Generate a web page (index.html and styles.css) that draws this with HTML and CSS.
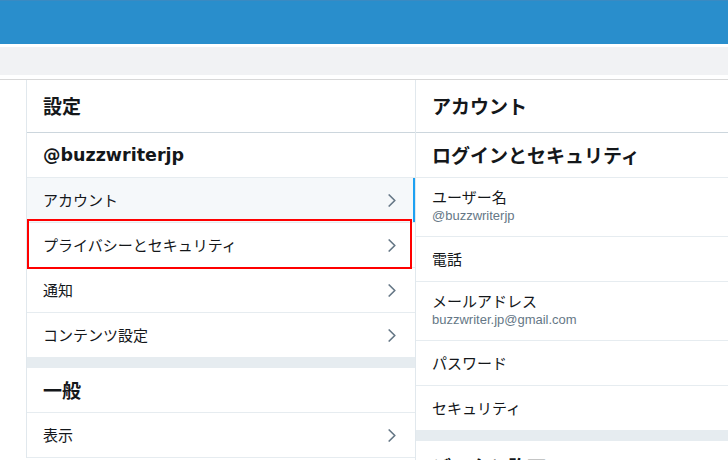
FILE: index.html
```html
<!DOCTYPE html>
<html lang="ja">
<head>
<meta charset="utf-8">
<title>設定</title>
<link rel="stylesheet" href="styles.css">
</head>
<body>
<div class="page">
  <header class="topbar"></header>
  <div class="subbar"></div>
  <div class="main">
    <div class="spacer"></div>
    <section class="col left">
      <div class="head">設定</div>
      <div class="subhead handle">@buzzwriterjp</div>
      <a class="row active"><span>アカウント</span><svg class="chev" viewBox="0 0 8 13" width="8" height="13"><polyline points="1.2,1 6.8,6.5 1.2,12"/></svg></a>
      <a class="row"><span>プライバシーとセキュリティ</span><svg class="chev" viewBox="0 0 8 13" width="8" height="13"><polyline points="1.2,1 6.8,6.5 1.2,12"/></svg></a>
      <a class="row"><span>通知</span><svg class="chev" viewBox="0 0 8 13" width="8" height="13"><polyline points="1.2,1 6.8,6.5 1.2,12"/></svg></a>
      <a class="row"><span>コンテンツ設定</span><svg class="chev" viewBox="0 0 8 13" width="8" height="13"><polyline points="1.2,1 6.8,6.5 1.2,12"/></svg></a>
      <div class="sep"></div>
      <div class="subhead">一般</div>
      <a class="row"><span>表示</span><svg class="chev" viewBox="0 0 8 13" width="8" height="13"><polyline points="1.2,1 6.8,6.5 1.2,12"/></svg></a>
      <div class="highlight"></div>
    </section>
    <section class="col right">
      <div class="head">アカウント</div>
      <div class="subhead">ログインとセキュリティ</div>
      <div class="row two"><span class="label">ユーザー名</span><span class="sub">@buzzwriterjp</span></div>
      <div class="row"><span>電話</span></div>
      <div class="row two"><span class="label">メールアドレス</span><span class="sub">buzzwriter.jp@gmail.com</span></div>
      <div class="row"><span>パスワード</span></div>
      <div class="row"><span>セキュリティ</span></div>
      <div class="sep"></div>
      <div class="head">データと許可</div>
    </section>
  </div>
</div>
</body>
</html>
```
FILE: styles.css
```css
* { box-sizing: border-box; }
html, body { margin: 0; padding: 0; }
body {
  width: 728px;
  height: 460px;
  overflow: hidden;
  background: #fff;
  font-family: "Noto Sans CJK JP", "Noto Sans", sans-serif;
  color: #14171a;
}
.page { display: flex; flex-direction: column; }
.topbar {
  height: 44px;
  background: #298ecc;
  border-top: 1px solid #3a8ac2;
}
.subbar {
  height: 28px;
  margin-top: 3px;
  background: #f1f2f4;
}
.main {
  margin-top: 4px;
  border-top: 1px solid #d8d8d8;
  display: flex;
  align-items: flex-start;
}
.spacer { width: 26px; flex: none; }
.col { display: flex; flex-direction: column; }
.left {
  position: relative;
  width: 389px;
  flex: none;
  border-left: 1px solid #e1e8ed;
}
.right {
  flex: 1;
  border-left: 1px solid #e1e8ed;
}
.head {
  height: 53px;
  padding: 0 16px 1px;
  display: flex;
  align-items: center;
  font-size: 19px;
  font-weight: 700;
  border-bottom: 1px solid #ccd6dd;
}
.subhead {
  height: 45px;
  padding: 0 16px 1px;
  display: flex;
  align-items: center;
  font-size: 19px;
  font-weight: 700;
  border-bottom: 1px solid #e6ecf0;
}
.handle {
  font-family: "DejaVu Sans", sans-serif;
  font-size: 17.5px;
  font-weight: 700;
  padding-bottom: 0;
}
.row {
  height: 45px;
  padding: 0 19px 2px 16px;
  display: flex;
  align-items: center;
  justify-content: space-between;
  font-size: 15px;
  color: #14171a;
  border-bottom: 1px solid #e6ecf0;
  text-decoration: none;
}
.row .chev { margin-top: 2px; }
.row.active {
  background: #f5f8fa;
  box-shadow: inset -2px 0 0 #1da1f2;
}
.row.two {
  height: 59px;
  flex-direction: column;
  align-items: flex-start;
  justify-content: flex-start;
  padding-top: 9px;
}
.label { line-height: 20px; }
.sub {
  font-family: "Liberation Sans", Arial, sans-serif;
  font-size: 13px;
  line-height: 18px;
  color: #657786;
}
.chev { flex: none; }
.chev polyline {
  fill: none;
  stroke: #657786;
  stroke-width: 1.7;
  stroke-linecap: round;
  stroke-linejoin: round;
}
.sep {
  height: 10px;
  background: #e6ecf0;
}
.highlight {
  position: absolute;
  left: 0;
  top: 139px;
  width: 385px;
  height: 50px;
  border: 2px solid #ff0000;
}
```
